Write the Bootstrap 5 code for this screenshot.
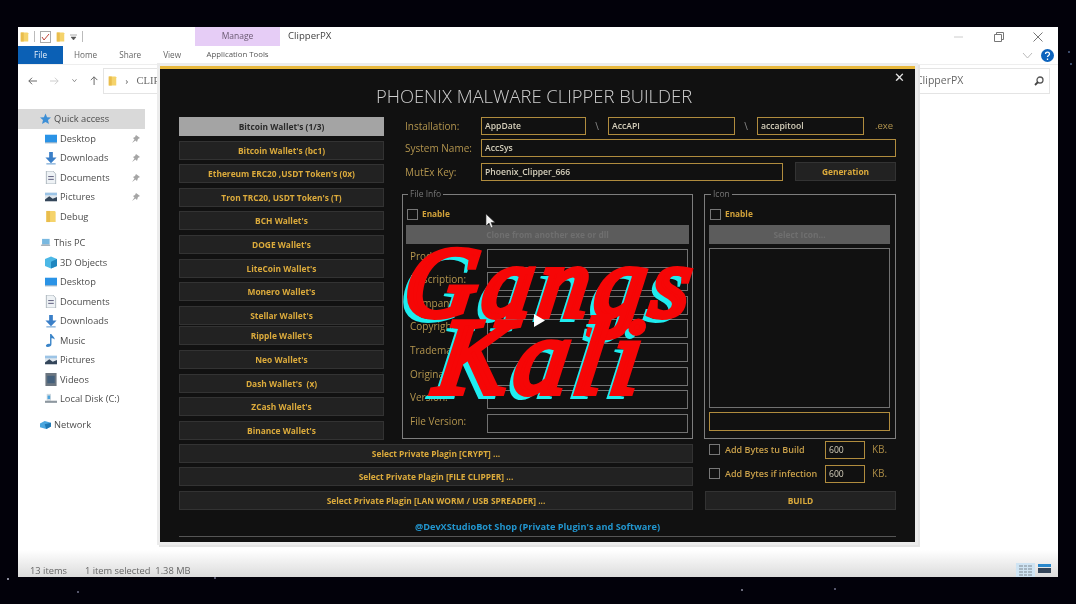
<!DOCTYPE html>
<html lang="en">
<head>
  <meta charset="UTF-8" />
  <meta name="viewport" content="width=device-width, initial-scale=1.0"/>
  <title>ClipperPX</title>
  <link href="https://cdn.jsdelivr.net/npm/bootstrap@5.3.0/dist/css/bootstrap.min.css" rel="stylesheet">
  <style>
    html, body { height: 100%; }
    body {
      margin: 0;
      overflow: hidden;
      position: relative;
      background-color: #02010a;
      background-image:
        radial-gradient(circle at 8px 579px, #8a8a9a 0 1px, transparent 1.5px),
        radial-gradient(circle at 78px 592px, #55556a 0 1px, transparent 1.5px),
        radial-gradient(circle at 215px 578px, #55556a 0 1px, transparent 1.5px),
        radial-gradient(circle at 742px 590px, #6a6a7a 0 1px, transparent 1.5px),
        radial-gradient(circle at 835px 589px, #55556a 0 1px, transparent 1.5px),
        radial-gradient(circle at 1069px 52px, #3a4a6a 0 1px, transparent 1.5px),
        radial-gradient(circle at 1071px 64px, #3a4a6a 0 1px, transparent 1.5px);
      font-family: "Open Sans", "Liberation Sans", sans-serif;
    }

    /* explorer window */
    .explorer {
      position: absolute;
      left: 18px;
      top: 27px;
      width: 1040px;
      height: 550px;
      background: #fff;
      color: #555;
      overflow: hidden;
      display: flex;
      flex-direction: column;
      font-size: 10px;
      filter: blur(.4px);
    }
    .title-row { height: 19px; flex: none; }
    .qat { width: 177px; padding-left: 2px; gap: 5px; }
    .qat-sep { width: 1px; height: 11px; background: #bbb; }
    .manage-tab {
      width: 85px;
      background: #e6cdf6;
      color: #6a5a72;
      font-size: 8.5px;
    }
    .win-title { padding-left: 8px; font-size: 9.6px; color: #444; }
    .win-ctrls { gap: 29px; padding-right: 15px; color: #777; }
    .tab-row {
      height: 18px;
      flex: none;
      font-size: 8.2px;
      color: #666;
    }
    .file-tab {
      width: 45px;
      background: #0b60b5;
      color: #e8f0fa;
    }
    .tab-name { margin-left: 11px; margin-right: 11px; }
    .app-tools { width: 85px; text-align: center; margin-left: 3px; white-space: nowrap; color: #555; font-size: 7.8px; }
    .addr-row {
      height: 30px;
      flex: none;
      padding: 2px 8px 0 10px;
      gap: 5px;
      border-top: 1px solid #eee;
    }
    .nav-arrows { gap: 13px; width: 70px; }
    .addr-box, .search-box {
      height: 26px;
      border: 1px solid #e4e4e4;
      font-size: 10.5px;
      color: #666;
    }
    .addr-box { flex: 1; padding-left: 4px; gap: 8px; font-family: "Liberation Serif", serif; }
    .search-box { width: 185px; padding: 0 5px 0 14px; justify-content: space-between; }
    .body-row { flex: 1; min-height: 0; }
    .side-nav { width: 127px; padding-top: 15px; font-size: 9.3px; color: #4c4c4c; }
    .nav-line { height: 19.55px; padding-right: 4px; white-space: nowrap; }
    .nav-line.on { background: #d9d9d9; height: 20px; }
    .nav-line.top-level { padding-left: 22px; }
    .nav-line.sub-level { padding-left: 27px; }
    .nav-line svg { flex: none; margin-right: 3px; }
    .nav-gap { height: 6.5px; }
    .pin-mark { margin-left: auto; margin-right: 0 !important; }
    .status-row {
      height: 27px;
      flex: none;
      background: linear-gradient(#fff, #dcdcdc);
      font-size: 9.3px;
      color: #666;
      padding: 14px 7px 0 12px;
      white-space: nowrap;
    }
    .status-sel { margin-left: 18px; }
    .view-btns { margin-left: auto; gap: 3px; margin-top: -1px; }
    .view-on { width: 19px; height: 15px; background: #cfe4f3; display: flex; align-items: center; justify-content: center; }

    /* builder window, sits over the explorer */
    .builder {
      position: absolute;
      left: 160px;
      top: 66px;
      width: 755px;
      height: 476px;
      background: #111;
      border-top: 3px solid #e8b83c;
      box-shadow: 0 0 0 3px #ececec, 2px 2px 0 3px #e4e4e4;
      padding: 0 19px;
      color: #b3954e;
      filter: blur(.4px);
    }
    .close-x {
      position: absolute;
      right: 10px;
      top: 1px;
      color: #e6e6e6;
      font-size: 13px;
      line-height: 15px;
      font-weight: 600;
      font-family: "DejaVu Sans", sans-serif;
    }
    .main-title {
      height: 48px;
      margin: 0;
      padding: 15px 7px 0 0;
      text-align: center;
      font-family: "Open Sans", sans-serif;
      font-weight: 300;
      font-size: 18.4px;
      line-height: 24px;
      color: #cfcfcf;
    }
    .upper-row { height: 323.7px; gap: 21px; }
    .wallet-col { width: 205px; flex: none; }
    .form-col { width: 491px; flex: none; }
    .lower-row { gap: 12px; }
    .plugin-col { width: 514px; flex: none; padding-top: 3.2px; }
    .bytes-col { width: 191px; flex: none; }

    .dark-btn {
      display: block;
      width: 100%;
      height: 19px;
      margin-bottom: 4.6px;
      padding: 0;
      border: 1px solid #333;
      border-radius: 0;
      background: #222;
      color: #dcab3c;
      font-size: 8.4px;
      font-weight: 700;
      line-height: 17px;
      white-space: nowrap;
    }
    .dark-btn.picked { background: #a4a4a4; border-color: #a4a4a4; color: #2a2a2a; }
    .dark-btn.tight { margin-bottom: 1.7px; }
    .dark-btn.off {
      background: #5c5c5c;
      border-color: #5c5c5c;
      color: #6f6f6f;
      opacity: 1;
      margin-bottom: 0;
    }

    .path-row { height: 18px; margin-bottom: 4px; font-size: 10px; }
    .path-row.third { margin-top: 6px; margin-bottom: 0; }
    .path-label { width: 76px; flex: none; white-space: nowrap; }
    .gold-input {
      height: 18px;
      min-height: 0;
      padding: 0 3px;
      border: 1px solid #b08c3e;
      border-radius: 0;
      background: #111;
      color: #d6d0bc;
      font-size: 8.6px;
      font-weight: 600;
      line-height: 16px;
      box-shadow: none;
    }
    .install-a { width: 105px; flex: none; }
    .install-b { width: 127px; flex: none; }
    .install-c { width: 107px; flex: none; }
    .path-sep { width: 22px; flex: none; text-align: center; color: #8a8a8a; }
    .exe-tail { margin-left: 11px; font-size: 9.5px; }
    .gen-btn { width: 101px; flex: none; margin: -1px 0 0 12px; }

    .groups { gap: 11px; margin: 8px 0 0 -3px; }
    .group-box {
      margin: 0;
      padding: 0 3px;
      height: 250px;
      border: 1px solid #7d7d7d;
    }
    .group-box legend {
      float: none;
      width: auto;
      margin: 0 0 0 2px;
      padding: 0 2px;
      font-size: 8.5px;
      line-height: 10px;
      color: #777;
    }
    .file-box { width: 291px; }
    .icon-box { width: 192px; padding: 0 5px 0 4px; }
    .enable-row { height: 11px; margin: 10px 0 5px 1px; gap: 4px; font-size: 8.3px; font-weight: 700; color: #d2a23a; }
    .sq-check {
      width: 11px;
      height: 11px;
      margin: 0;
      flex: none;
      border: 1px solid #777;
      border-radius: 0 !important;
      background-color: transparent;
    }
    .info-line { height: 19px; margin-top: 4.6px; font-size: 10px; }
    .info-line span { width: 81px; flex: none; padding-left: 4px; white-space: nowrap; }
    .gray-input {
      width: 201px;
      height: 19px;
      padding: 0;
      border: 1px solid #717171;
      border-radius: 0;
      background: #111;
    }
    .icon-list { height: 160px; margin-top: 4px; border: 1px solid #717171; }
    .icon-path { width: 181px; height: 19px; margin-top: 4px; }

    .bytes-line { height: 18px; margin-bottom: 6px; padding-left: 4px; font-size: 9px; font-weight: 600; color: #c9a04a; white-space: nowrap; }
    .bytes-line label { margin-left: 5px; width: 100px; flex: none; }
    .bytes-input { width: 40px; flex: none; font-weight: 400; }
    .kb-tail { margin-left: 7px; font-size: 10px; font-weight: 400; color: #a98a45; }
    .build-btn { margin: 8px 0 0; }

    .footer-link {
      height: 19px;
      margin-top: 3px;
      border-bottom: 1px solid #555;
      text-align: center;
      color: #2296cf;
      font-size: 9.2px;
      font-weight: 700;
      line-height: 17px;
    }

    /* video overlay */
    .brand-line {
      position: absolute;
      font-family: "Liberation Serif", serif;
      font-style: italic;
      font-weight: 400;
      color: #f60606;
      -webkit-text-stroke: 6px #f60606;
      text-shadow: -6px 6px 0 #1fecef;
      line-height: 1;
      white-space: nowrap;
      transform: skewX(-8deg);
    }
    .brand-one { left: 406px; top: 233px; font-size: 100px; letter-spacing: 6px; }
    .brand-two { left: 438px; top: 303px; font-size: 108px; letter-spacing: 6px; }
    .play-mark { position: absolute; left: 533px; top: 313px; }
    .mouse-mark { position: absolute; left: 485px; top: 213px; }
  </style>
</head>
<body>
  <svg width="0" height="0" class="position-absolute">
    <symbol id="i-folder" viewBox="0 0 12 14"><path d="M1 1h9l1 1v11H1z" fill="#f5d36b"/><path d="M1 1h4v12H1z" fill="#e9bd4d"/></symbol>
    <symbol id="i-star" viewBox="0 0 14 14"><path d="M7 0l2 4.8 5 .4-3.800 3.200 1.200 5L7 10.700 2.600 13.400l1.200-5L0 5.200l5-.4z" fill="#3d8fd6"/></symbol>
    <symbol id="i-desk" viewBox="0 0 14 12"><rect x="0" y="1" width="14" height="9" fill="#2a93e6"/><rect y="10" width="14" height="1" fill="#7a9cb8"/></symbol>
    <symbol id="i-down" viewBox="0 0 12 14"><path d="M4 0h4v6h4l-6 6-6-6h4z" fill="#3a7fc8"/><rect x="1" y="12" width="10" height="1.500" fill="#8ab4dc"/></symbol>
    <symbol id="i-doc" viewBox="0 0 12 14"><path d="M1 0h7l3 3v11H1z" fill="#eef2f5" stroke="#9aa5ad" stroke-width=".8"/><path d="M3 6h6M3 9h6" stroke="#557" stroke-width="1"/></symbol>
    <symbol id="i-pic" viewBox="0 0 14 12"><rect y="1" width="14" height="10" fill="#dfe7ee"/><path d="M0 9l5-4 4 3 5-2v5H0z" fill="#34465a"/><rect y="1" width="14" height="3" fill="#9cc4e6"/></symbol>
    <symbol id="i-pc" viewBox="0 0 16 14"><path d="M3 1h11v8H3z" fill="#78b8e0"/><path d="M1 10l2-1h11l1 2H2z" fill="#8a9aa6"/></symbol>
    <symbol id="i-cube" viewBox="0 0 14 14"><path d="M7 0l7 3v8l-7 3-7-3V3z" fill="#4cb8e6"/><path d="M7 6v8l7-3V3z" fill="#1f86bf"/></symbol>
    <symbol id="i-note" viewBox="0 0 12 14"><path d="M5 0h1.500c.5 2 3.500 3 3.500 6-1-1-2-1.500-3.500-1.500V11c0 2-2 3-4 3S0 12.500 1 11.500s3-1.200 4-.7z" fill="#3a84c8"/></symbol>
    <symbol id="i-video" viewBox="0 0 12 14"><rect width="12" height="14" fill="#6c7680"/><rect x="2" y="3" width="8" height="8" fill="#44607c"/></symbol>
    <symbol id="i-disk" viewBox="0 0 14 12"><path d="M2 0h5v8H2z" fill="#cfd9e0"/><path d="M0 8h14v2.500H0z" fill="#8d979f"/><path d="M3 2h3v4H3z" fill="#4ba3dc"/></symbol>
    <symbol id="i-net" viewBox="0 0 14 12"><path d="M0 4l6-3 8 2v5l-6 3-8-2z" fill="#4aa6de"/><path d="M6 5l8-2v5l-6 3z" fill="#1f78b4"/></symbol>
    <symbol id="i-pin" viewBox="0 0 10 10"><path d="M5 1l4 3-2 1-1 3-1.500-1.500L1 9l2.500-3.500L2 4l2-1z" fill="#a5a5a5"/></symbol>
  </svg>

  <div class="explorer">
    <div class="title-row d-flex">
      <div class="qat d-flex align-items-center">
        <svg width="9" height="12"><use href="#i-folder"/></svg>
        <i class="qat-sep"></i>
        <svg width="11" height="12" viewBox="0 0 11 12"><rect x=".5" y=".5" width="10" height="11" fill="#fff" stroke="#aaa"/><path d="M2 6l2 3 5-6" stroke="#c0453a" fill="none"/></svg>
        <svg width="9" height="12"><use href="#i-folder"/></svg>
        <svg width="7" height="6" viewBox="0 0 7 6"><path d="M0 1h7M1 3h5l-2.500 3z" fill="#555" stroke="#555" stroke-width=".5"/></svg>
        <i class="qat-sep"></i>
      </div>
      <div class="manage-tab d-flex align-items-center justify-content-center">Manage</div>
      <div class="win-title d-flex align-items-center">ClipperPX</div>
      <div class="win-ctrls d-flex align-items-center ms-auto">
        <svg width="12" height="10" viewBox="0 0 12 10"><path d="M1 5h9" stroke="#ccc"/></svg>
        <svg width="10" height="10" viewBox="0 0 10 10"><path d="M.5 2.500h7v7h-7zM2.500 2.500v-2h7v7h-2" fill="none" stroke="#777"/></svg>
        <svg width="10" height="10" viewBox="0 0 10 10"><path d="M.5.500l9 9M9.500.500l-9 9" stroke="#777"/></svg>
      </div>
    </div>
    <div class="tab-row d-flex align-items-center">
      <div class="file-tab h-100 d-flex align-items-center justify-content-center">File</div>
      <span class="tab-name">Home</span>
      <span class="tab-name">Share</span>
      <span class="tab-name">View</span>
      <span class="app-tools">Application Tools</span>
      <div class="ms-auto d-flex align-items-center gap-2 pe-1">
        <svg width="11" height="7" viewBox="0 0 11 7"><path d="M1 1l4.500 5L10 1" fill="none" stroke="#bbb"/></svg>
        <svg width="13" height="13" viewBox="0 0 13 13"><circle cx="6.500" cy="6.500" r="6.500" fill="#0c63bd"/><path d="M4.500 5c0-2.500 4-2.500 4 0 0 1.500-2 1.500-2 3M6.500 9.500v1.500" stroke="#fff" stroke-width="1.300" fill="none"/></svg>
      </div>
    </div>
    <div class="addr-row d-flex align-items-center">
      <div class="nav-arrows d-flex align-items-center">
        <svg width="11" height="10" viewBox="0 0 11 10"><path d="M5 1L1 5l4 4M1 5h10" fill="none" stroke="#666" stroke-width="1.200"/></svg>
        <svg width="11" height="10" viewBox="0 0 11 10"><path d="M6 1l4 4-4 4M10 5H0" fill="none" stroke="#ccc" stroke-width="1.200"/></svg>
        <svg width="6" height="5" viewBox="0 0 6 5"><path d="M.5 1L3 4l2.500-3" fill="none" stroke="#777"/></svg>
        <svg width="10" height="11" viewBox="0 0 10 11"><path d="M1 5l4-4 4 4M5 1v10" fill="none" stroke="#666" stroke-width="1.200"/></svg>
      </div>
      <div class="addr-box d-flex align-items-center">
        <svg width="9" height="12"><use href="#i-folder"/></svg>
        <span>&rsaquo;</span>
        <span>CLIPPER</span>
      </div>
      <div class="search-box d-flex align-items-center">
        <span>Search ClipperPX</span>
        <svg width="10" height="10" viewBox="0 0 10 10"><circle cx="6" cy="4" r="3" fill="none" stroke="#555" stroke-width="1.300"/><path d="M4 6L1 9" stroke="#444" stroke-width="1.800"/></svg>
      </div>
    </div>
    <div class="body-row d-flex">
      <nav class="side-nav">
        <div class="nav-line on top-level d-flex align-items-center"><svg width="11" height="12"><use href="#i-star"/></svg>Quick access</div>
        <div class="nav-line sub-level d-flex align-items-center"><svg width="12" height="12"><use href="#i-desk"/></svg>Desktop<svg class="pin-mark" width="10" height="10"><use href="#i-pin"/></svg></div>
        <div class="nav-line sub-level d-flex align-items-center"><svg width="12" height="13"><use href="#i-down"/></svg>Downloads<svg class="pin-mark" width="10" height="10"><use href="#i-pin"/></svg></div>
        <div class="nav-line sub-level d-flex align-items-center"><svg width="12" height="13"><use href="#i-doc"/></svg>Documents<svg class="pin-mark" width="10" height="10"><use href="#i-pin"/></svg></div>
        <div class="nav-line sub-level d-flex align-items-center"><svg width="12" height="12"><use href="#i-pic"/></svg>Pictures<svg class="pin-mark" width="10" height="10"><use href="#i-pin"/></svg></div>
        <div class="nav-line sub-level d-flex align-items-center"><svg width="12" height="13"><use href="#i-folder"/></svg>Debug</div>
        <div class="nav-gap"></div>
        <div class="nav-line top-level d-flex align-items-center"><svg width="11" height="12"><use href="#i-pc"/></svg>This PC</div>
        <div class="nav-line sub-level d-flex align-items-center"><svg width="12" height="13"><use href="#i-cube"/></svg>3D Objects</div>
        <div class="nav-line sub-level d-flex align-items-center"><svg width="12" height="12"><use href="#i-desk"/></svg>Desktop</div>
        <div class="nav-line sub-level d-flex align-items-center"><svg width="12" height="13"><use href="#i-doc"/></svg>Documents</div>
        <div class="nav-line sub-level d-flex align-items-center"><svg width="12" height="13"><use href="#i-down"/></svg>Downloads</div>
        <div class="nav-line sub-level d-flex align-items-center"><svg width="12" height="13"><use href="#i-note"/></svg>Music</div>
        <div class="nav-line sub-level d-flex align-items-center"><svg width="12" height="12"><use href="#i-pic"/></svg>Pictures</div>
        <div class="nav-line sub-level d-flex align-items-center"><svg width="12" height="13"><use href="#i-video"/></svg>Videos</div>
        <div class="nav-line sub-level d-flex align-items-center"><svg width="12" height="12"><use href="#i-disk"/></svg>Local Disk (C:)</div>
        <div class="nav-gap"></div>
        <div class="nav-line top-level d-flex align-items-center"><svg width="11" height="12"><use href="#i-net"/></svg>Network</div>
      </nav>
    </div>
    <div class="status-row d-flex">
      <span>13 items</span>
      <span class="status-sel">1 item selected&nbsp; 1.38 MB</span>
      <div class="view-btns d-flex align-items-start">
        <div class="view-on"><svg width="13" height="11" viewBox="0 0 13 11"><path d="M0 1h4M5 1h3M9 1h4M0 4h4M5 4h3M9 4h4M0 7h4M5 7h3M9 7h4M0 10h4M5 10h3M9 10h4" stroke="#7c8790"/></svg></div>
        <svg width="13" height="11" viewBox="0 0 13 11"><rect width="13" height="3" y="1" fill="#2a88cc"/><rect width="13" height="5" y="5" fill="#35465a"/></svg>
      </div>
    </div>
  </div>

  <div class="builder">
    <div class="close-x">&#10005;</div>
    <h1 class="main-title">PHOENIX MALWARE CLIPPER BUILDER</h1>
    <div class="upper-row d-flex">
      <div class="wallet-col">
        <button class="btn dark-btn picked">Bitcoin Wallet's (1/3)</button>
        <button class="btn dark-btn">Bitcoin Wallet's (bc1)</button>
        <button class="btn dark-btn">Ethereum ERC20 ,USDT Token's (0x)</button>
        <button class="btn dark-btn">Tron TRC20, USDT Token's (T)</button>
        <button class="btn dark-btn">BCH Wallet's</button>
        <button class="btn dark-btn">DOGE Wallet's</button>
        <button class="btn dark-btn">LiteCoin Wallet's</button>
        <button class="btn dark-btn">Monero Wallet's</button>
        <button class="btn dark-btn tight">Stellar Wallet's</button>
        <button class="btn dark-btn">Ripple Wallet's</button>
        <button class="btn dark-btn">Neo Wallet's</button>
        <button class="btn dark-btn">Dash Wallet's&nbsp; (x)</button>
        <button class="btn dark-btn">ZCash Wallet's</button>
        <button class="btn dark-btn">Binance Wallet's</button>
      </div>
      <div class="form-col">
        <div class="path-row d-flex align-items-center">
          <span class="path-label">Installation:</span>
          <input class="form-control gold-input install-a" value="AppDate">
          <span class="path-sep">\</span>
          <input class="form-control gold-input install-b" value="AccAPI">
          <span class="path-sep">\</span>
          <input class="form-control gold-input install-c" value="accapitool">
          <span class="exe-tail">.exe</span>
        </div>
        <div class="path-row d-flex align-items-center">
          <span class="path-label">System Name:</span>
          <input class="form-control gold-input" value="AccSys">
        </div>
        <div class="path-row third d-flex align-items-center">
          <span class="path-label">MutEx Key:</span>
          <input class="form-control gold-input" value="Phoenix_Clipper_666">
          <button class="btn dark-btn gen-btn">Generation</button>
        </div>
        <div class="groups d-flex">
          <fieldset class="group-box file-box">
            <legend>File Info</legend>
            <div class="enable-row d-flex align-items-center">
              <input class="form-check-input sq-check" type="checkbox">
              <span>Enable</span>
            </div>
            <button class="btn dark-btn off" disabled>Clone from another exe or dll</button>
            <div class="info-line d-flex"><span>Product:</span><div class="gray-input"></div></div>
            <div class="info-line d-flex"><span>Description:</span><div class="gray-input"></div></div>
            <div class="info-line d-flex"><span>Company:</span><div class="gray-input"></div></div>
            <div class="info-line d-flex"><span>Copyright:</span><div class="gray-input"></div></div>
            <div class="info-line d-flex"><span>Trademark:</span><div class="gray-input"></div></div>
            <div class="info-line d-flex"><span>Original:</span><div class="gray-input"></div></div>
            <div class="info-line d-flex"><span>Version:</span><div class="gray-input"></div></div>
            <div class="info-line d-flex"><span>File Version:</span><div class="gray-input"></div></div>
          </fieldset>
          <fieldset class="group-box icon-box">
            <legend>Icon</legend>
            <div class="enable-row d-flex align-items-center">
              <input class="form-check-input sq-check" type="checkbox">
              <span>Enable</span>
            </div>
            <button class="btn dark-btn off" disabled>Select Icon...</button>
            <div class="icon-list"></div>
            <input class="form-control gold-input icon-path">
          </fieldset>
        </div>
      </div>
    </div>
    <div class="lower-row d-flex">
      <div class="plugin-col">
        <button class="btn dark-btn">Select Private Plagin [CRYPT] ...</button>
        <button class="btn dark-btn">Select Private Plagin [FILE CLIPPER] ...</button>
        <button class="btn dark-btn">Select Private Plagin [LAN WORM / USB SPREADER] ...</button>
      </div>
      <div class="bytes-col">
        <div class="bytes-line d-flex align-items-center">
          <input class="form-check-input sq-check" type="checkbox">
          <label>Add Bytes tu Build</label>
          <input class="form-control gold-input bytes-input" value="600">
          <span class="kb-tail">KB.</span>
        </div>
        <div class="bytes-line d-flex align-items-center">
          <input class="form-check-input sq-check" type="checkbox">
          <label>Add Bytes if infection</label>
          <input class="form-control gold-input bytes-input" value="600">
          <span class="kb-tail">KB.</span>
        </div>
        <button class="btn dark-btn build-btn">BUILD</button>
      </div>
    </div>
    <div class="footer-link">@DevXStudioBot Shop (Private Plugin's and Software)</div>
  </div>

  <svg class="mouse-mark" width="12" height="17" viewBox="0 0 12 17"><path d="M1 1v12l3-3 2 5 2-1-2-4.500h4z" fill="#f2f2f2" stroke="#333" stroke-width=".6"/></svg>
  <div class="brand-line brand-one">Gangs</div>
  <div class="brand-line brand-two">Kali</div>
  <svg class="play-mark" width="13" height="15" viewBox="0 0 13 15"><path d="M1 1l11 6.500L1 14z" fill="#fff"/></svg>

  <script src="https://cdn.jsdelivr.net/npm/bootstrap@5.3.0/dist/js/bootstrap.bundle.min.js"></script>
</body>
</html>
